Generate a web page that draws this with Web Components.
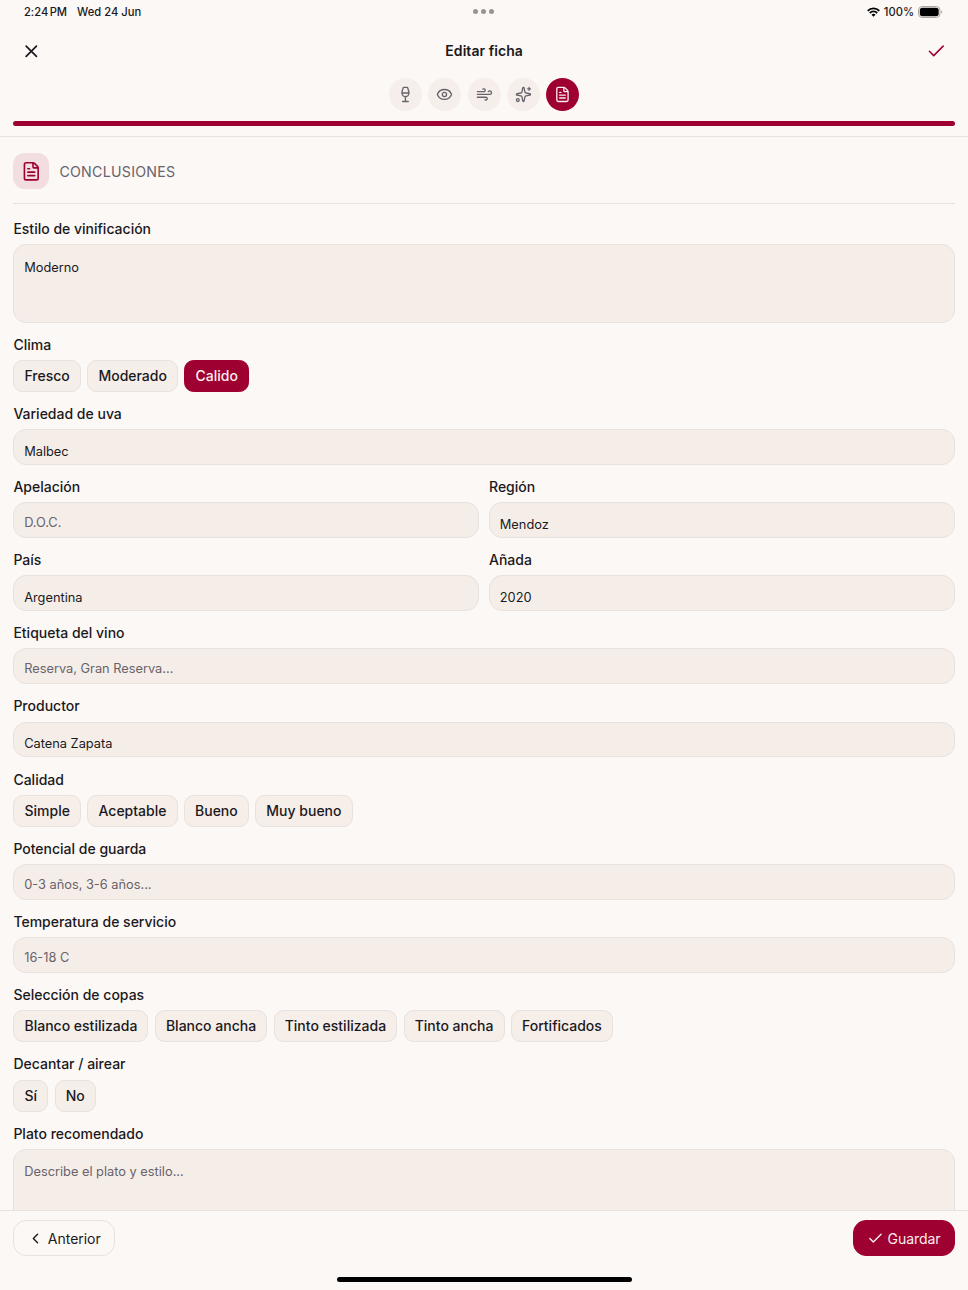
<!DOCTYPE html>
<html lang="es">
<head>
<meta charset="utf-8">
<title>Editar ficha</title>
<style>
html, body {
    margin: 0;
    height: 100%;
}

body {
    --bg: #fcf8f5;
    --surface: #f5ede8;
    --line: #e8e2df;
    --wine: #9e0031;
    --ink: #1b191d;
    --muted: #68636a;
    background: var(--bg);
    color: var(--ink);
    font-family: Inter, "Liberation Sans", sans-serif;
    overflow: hidden;
}
</style>
</head>
<body>
<ficha-app></ficha-app>

<script>
const ICONS = {
    close: '<path d="M18 6 6 18M6 6l12 12"/>',
    check: '<path d="M20 6 9 17l-5-5"/>',
    back: '<path d="m15 18-6-6 6-6"/>',
    wine: '<path d="M8 22h8M7 10h10M12 15v7M12 15a5 5 0 0 0 5-5c0-2-.5-4-2-8H9c-1.5 4-2 6-2 8a5 5 0 0 0 5 5Z"/>',
    eye: '<path d="M2.06 12.35a1 1 0 0 1 0-.7 10.75 10.75 0 0 1 19.88 0 1 1 0 0 1 0 .7 10.75 10.75 0 0 1-19.88 0"/><circle cx="12" cy="12" r="3"/>',
    wind: '<path d="M12.8 19.6A2 2 0 1 0 14 16H2M17.5 8a2.5 2.5 0 1 1 2 4H2M9.8 4.4A2 2 0 1 1 11 8H2"/>',
    sparkles: '<path d="M11.02 2.81a1 1 0 0 1 1.96 0l1.05 5.56a2 2 0 0 0 1.6 1.6l5.56 1.05a1 1 0 0 1 0 1.96l-5.56 1.05a2 2 0 0 0-1.6 1.6l-1.05 5.56a1 1 0 0 1-1.96 0l-1.05-5.56a2 2 0 0 0-1.6-1.6l-5.56-1.05a1 1 0 0 1 0-1.96l5.56-1.05a2 2 0 0 0 1.6-1.6zM20 2v4M22 4h-4"/><circle cx="4" cy="20" r="2"/>',
    file: '<path d="M6 22a2 2 0 0 1-2-2V4a2 2 0 0 1 2-2h8a2.4 2.4 0 0 1 1.7.7l3.6 3.6A2.4 2.4 0 0 1 20 8v12a2 2 0 0 1-2 2zM14 2v5a1 1 0 0 0 1 1h5M10 9H8M16 13H8M16 17H8"/>'
};

class BaseElement extends HTMLElement {
    constructor() {
        super();
        this.attachShadow({ mode: 'open' });
    }

    connectedCallback() {
        this.shadowRoot.innerHTML = this.render();
    }
}

customElements.define('ficha-icon', class FichaIcon extends BaseElement {
    render() {
        const size = this.getAttribute('size') || 16.9;
        const stroke = this.getAttribute('stroke') || 2;
        return `
<style>
:host { display: block; flex: none; width: ${size}px; height: ${size}px; }
svg { display: block; width: 100%; height: 100%; overflow: visible; }
</style>
<svg viewBox="0 0 24 24" fill="none" stroke="currentColor" stroke-width="${stroke}" stroke-linecap="round" stroke-linejoin="round">${ICONS[this.getAttribute('name')]}</svg>`;
    }
});

customElements.define('status-bar', class StatusBar extends BaseElement {
    render() {
        return `
<style>
:host {
    display: grid;
    grid-template-columns: 1fr auto 1fr;
    align-items: center;
    height: 23px;
    padding: 0 25px 0 24px;
    font-size: 11.2px;
    font-weight: 500;
}
.left { display: flex; gap: 10px; letter-spacing: .03px; }
.time { letter-spacing: -.02px; word-spacing: -1.6px; }
.dots { display: flex; gap: 2.7px; }
.dots i { width: 5px; height: 5px; border-radius: 50%; background: #979491; }
.right { display: flex; justify-content: flex-end; align-items: center; }
.wifi { width: 13px; height: 10px; margin-right: 4px; }
.battery { width: 25px; height: 12px; margin-left: 4px; }
</style>
<div class="left"><span class="time">2:24 PM</span><span>Wed 24 Jun</span></div>
<div class="dots"><i></i><i></i><i></i></div>
<div class="right">
    <svg class="wifi" viewBox="0 0 13 10" fill="none" stroke="#000" stroke-width="1.8"><path d="M.7 3.8a8.2 8.2 0 0 1 11.6 0M2.8 6a5.2 5.2 0 0 1 7.4 0"/><path d="M6.5 9.7 4.5 7.7a2.8 2.8 0 0 1 4 0z" fill="#000" stroke="none"/></svg>
    <span>100%</span>
    <svg class="battery" viewBox="0 0 25 12"><rect x=".5" y=".5" width="21.5" height="11" rx="3.7" fill="none" stroke="#aaa6a3"/><rect x="1.8" y="1.8" width="18.9" height="8.4" rx="2.6"/><path d="M23.2 4.2c1.4.6 1.4 3 0 3.6z" fill="#aaa6a3"/></svg>
</div>`;
    }
});

customElements.define('step-dot', class StepDot extends BaseElement {
    render() {
        return `
<style>
:host {
    display: flex;
    align-items: center;
    justify-content: center;
    width: 33px;
    height: 33px;
    border-radius: 50%;
    background: #f5eeea;
    color: var(--muted);
}
:host([active]) { background: var(--wine); color: #fbeef0; }
</style>
<ficha-icon name="${this.getAttribute('icon')}" stroke="1.9"></ficha-icon>`;
    }
});

customElements.define('ficha-header', class FichaHeader extends BaseElement {
    render() {
        return `
<style>
:host { display: block; flex: none; height: 113.3px; border-bottom: 1px solid var(--line); }
.bar {
    display: grid;
    grid-template-columns: 1fr auto 1fr;
    align-items: center;
    height: 55.4px;
    padding: 0 21.2px 0 21.4px;
}
.bar ficha-icon { padding-top: .5px; }
h1 { margin: 0; font-size: 14px; font-weight: 600; letter-spacing: .05px; }
.save { justify-self: end; color: var(--wine); }
.steps { display: flex; justify-content: center; gap: 6.4px; }
.progress { height: 5px; margin: 9.8px 13.4px 0; border-radius: 3px; background: var(--wine); }
</style>
<div class="bar">
    <ficha-icon name="close" size="20.6"></ficha-icon>
    <h1><slot></slot></h1>
    <ficha-icon class="save" name="check" size="20.6" stroke="1.8"></ficha-icon>
</div>
<div class="steps">
    <step-dot icon="wine"></step-dot>
    <step-dot icon="eye"></step-dot>
    <step-dot icon="wind"></step-dot>
    <step-dot icon="sparkles"></step-dot>
    <step-dot icon="file" active></step-dot>
</div>
<div class="progress"></div>`;
    }
});

customElements.define('section-title', class SectionTitle extends BaseElement {
    render() {
        return `
<style>
:host {
    display: flex;
    align-items: center;
    gap: 10px;
    padding-bottom: 13.4px;
    border-bottom: 1px solid var(--line);
    color: var(--muted);
    font-size: 14.2px;
    letter-spacing: .26px;
}
.badge {
    display: flex;
    align-items: center;
    justify-content: center;
    width: 36px;
    height: 36px;
    border-radius: 11.5px;
    background: #f2dde1;
    color: var(--wine);
}
</style>
<span class="badge"><ficha-icon name="file" size="20.6" stroke="1.9"></ficha-icon></span>
<slot></slot>`;
    }
});

customElements.define('form-field', class FormField extends BaseElement {
    render() {
        return `
<style>
:host { display: block; min-width: 0; }
.label {
    height: 17.6px;
    margin-bottom: 6.5px;
    font-size: 14px;
    font-weight: 500;
    line-height: 17.6px;
}
.control { display: flex; gap: 6.4px; }
</style>
<div class="label">${this.getAttribute('label')}</div>
<div class="control"><slot></slot></div>`;
    }
});

customElements.define('text-box', class TextBox extends BaseElement {
    render() {
        return `
<style>
:host {
    display: block;
    box-sizing: border-box;
    flex: 1;
    min-width: 0;
    height: 35.8px;
    padding: 13.8px 9.8px 0;
    border: 1px solid var(--line);
    border-radius: 13px;
    background: var(--surface);
    font-size: 12.8px;
    line-height: 16px;
}
:host([placeholder]) { padding-top: 11.8px; color: var(--muted); }
:host([multiline]) { height: 78.2px; padding-top: 14.7px; }
:host([multiline][placeholder]) { padding-top: 14.2px; }
</style>
<slot></slot>`;
    }
});

customElements.define('option-chip', class OptionChip extends BaseElement {
    render() {
        return `
<style>
:host {
    display: block;
    box-sizing: border-box;
    height: 32.1px;
    padding: 0 10.1px;
    border: 1px solid var(--line);
    border-radius: 9.5px;
    background: #f5eee9;
    font-size: 14px;
    font-weight: 500;
    line-height: 30.5px;
    white-space: nowrap;
}
:host([selected]) { border-color: var(--wine); background: var(--wine); color: #fbeef0; }
</style>
<slot></slot>`;
    }
});

customElements.define('nav-button', class NavButton extends BaseElement {
    render() {
        return `
<style>
:host {
    display: flex;
    align-items: center;
    box-sizing: border-box;
    width: 101.6px;
    height: 36px;
    gap: 3.7px;
    padding-left: 12.9px;
    border: 1px solid var(--line);
    border-radius: 13px;
    font-size: 14px;
    letter-spacing: -.03px;
}
:host([primary]) { border-color: var(--wine); background: var(--wine); color: #fbeef0; }
</style>
<ficha-icon name="${this.getAttribute('icon')}"></ficha-icon>
<slot></slot>`;
    }
});

customElements.define('ficha-footer', class FichaFooter extends BaseElement {
    render() {
        return `
<style>
:host { display: block; flex: none; height: 79px; border-top: 1px solid var(--line); background: var(--bg); }
.actions { display: flex; justify-content: space-between; padding: 9.2px 13.4px 0; }
.home { width: 295px; height: 5px; margin: 21.2px auto 0; border-radius: 3px; background: #000; }
</style>
<div class="actions"><slot></slot></div>
<div class="home"></div>`;
    }
});

customElements.define('ficha-app', class FichaApp extends BaseElement {
    render() {
        return `
<style>
:host { display: flex; flex-direction: column; height: 100vh; }
main { flex: 1; min-height: 0; overflow: hidden; padding: 16.2px 13.4px 0; }
.fields { display: grid; gap: 13.2px; padding-top: 16.4px; }
.row { display: grid; grid-template-columns: 1fr 1fr; gap: 10px; }
</style>
<status-bar></status-bar>
<ficha-header>Editar ficha</ficha-header>
<main>
    <section-title>CONCLUSIONES</section-title>
    <div class="fields">
        <form-field label="Estilo de vinificación"><text-box multiline>Moderno</text-box></form-field>
        <form-field label="Clima">
            <option-chip>Fresco</option-chip>
            <option-chip>Moderado</option-chip>
            <option-chip selected>Calido</option-chip>
        </form-field>
        <form-field label="Variedad de uva"><text-box>Malbec</text-box></form-field>
        <div class="row">
            <form-field label="Apelación"><text-box placeholder>D.O.C.</text-box></form-field>
            <form-field label="Región"><text-box>Mendoz</text-box></form-field>
        </div>
        <div class="row">
            <form-field label="País"><text-box>Argentina</text-box></form-field>
            <form-field label="Añada"><text-box>2020</text-box></form-field>
        </div>
        <form-field label="Etiqueta del vino"><text-box placeholder>Reserva, Gran Reserva...</text-box></form-field>
        <form-field label="Productor"><text-box>Catena Zapata</text-box></form-field>
        <form-field label="Calidad">
            <option-chip>Simple</option-chip>
            <option-chip>Aceptable</option-chip>
            <option-chip>Bueno</option-chip>
            <option-chip>Muy bueno</option-chip>
        </form-field>
        <form-field label="Potencial de guarda"><text-box placeholder>0-3 años, 3-6 años...</text-box></form-field>
        <form-field label="Temperatura de servicio"><text-box placeholder>16-18 C</text-box></form-field>
        <form-field label="Selección de copas">
            <option-chip>Blanco estilizada</option-chip>
            <option-chip>Blanco ancha</option-chip>
            <option-chip>Tinto estilizada</option-chip>
            <option-chip>Tinto ancha</option-chip>
            <option-chip>Fortificados</option-chip>
        </form-field>
        <form-field label="Decantar / airear">
            <option-chip>Sí</option-chip>
            <option-chip>No</option-chip>
        </form-field>
        <form-field label="Plato recomendado"><text-box multiline placeholder>Describe el plato y estilo...</text-box></form-field>
    </div>
</main>
<ficha-footer>
    <nav-button icon="back">Anterior</nav-button>
    <nav-button icon="check" primary>Guardar</nav-button>
</ficha-footer>`;
    }
});
</script>
</body>
</html>
